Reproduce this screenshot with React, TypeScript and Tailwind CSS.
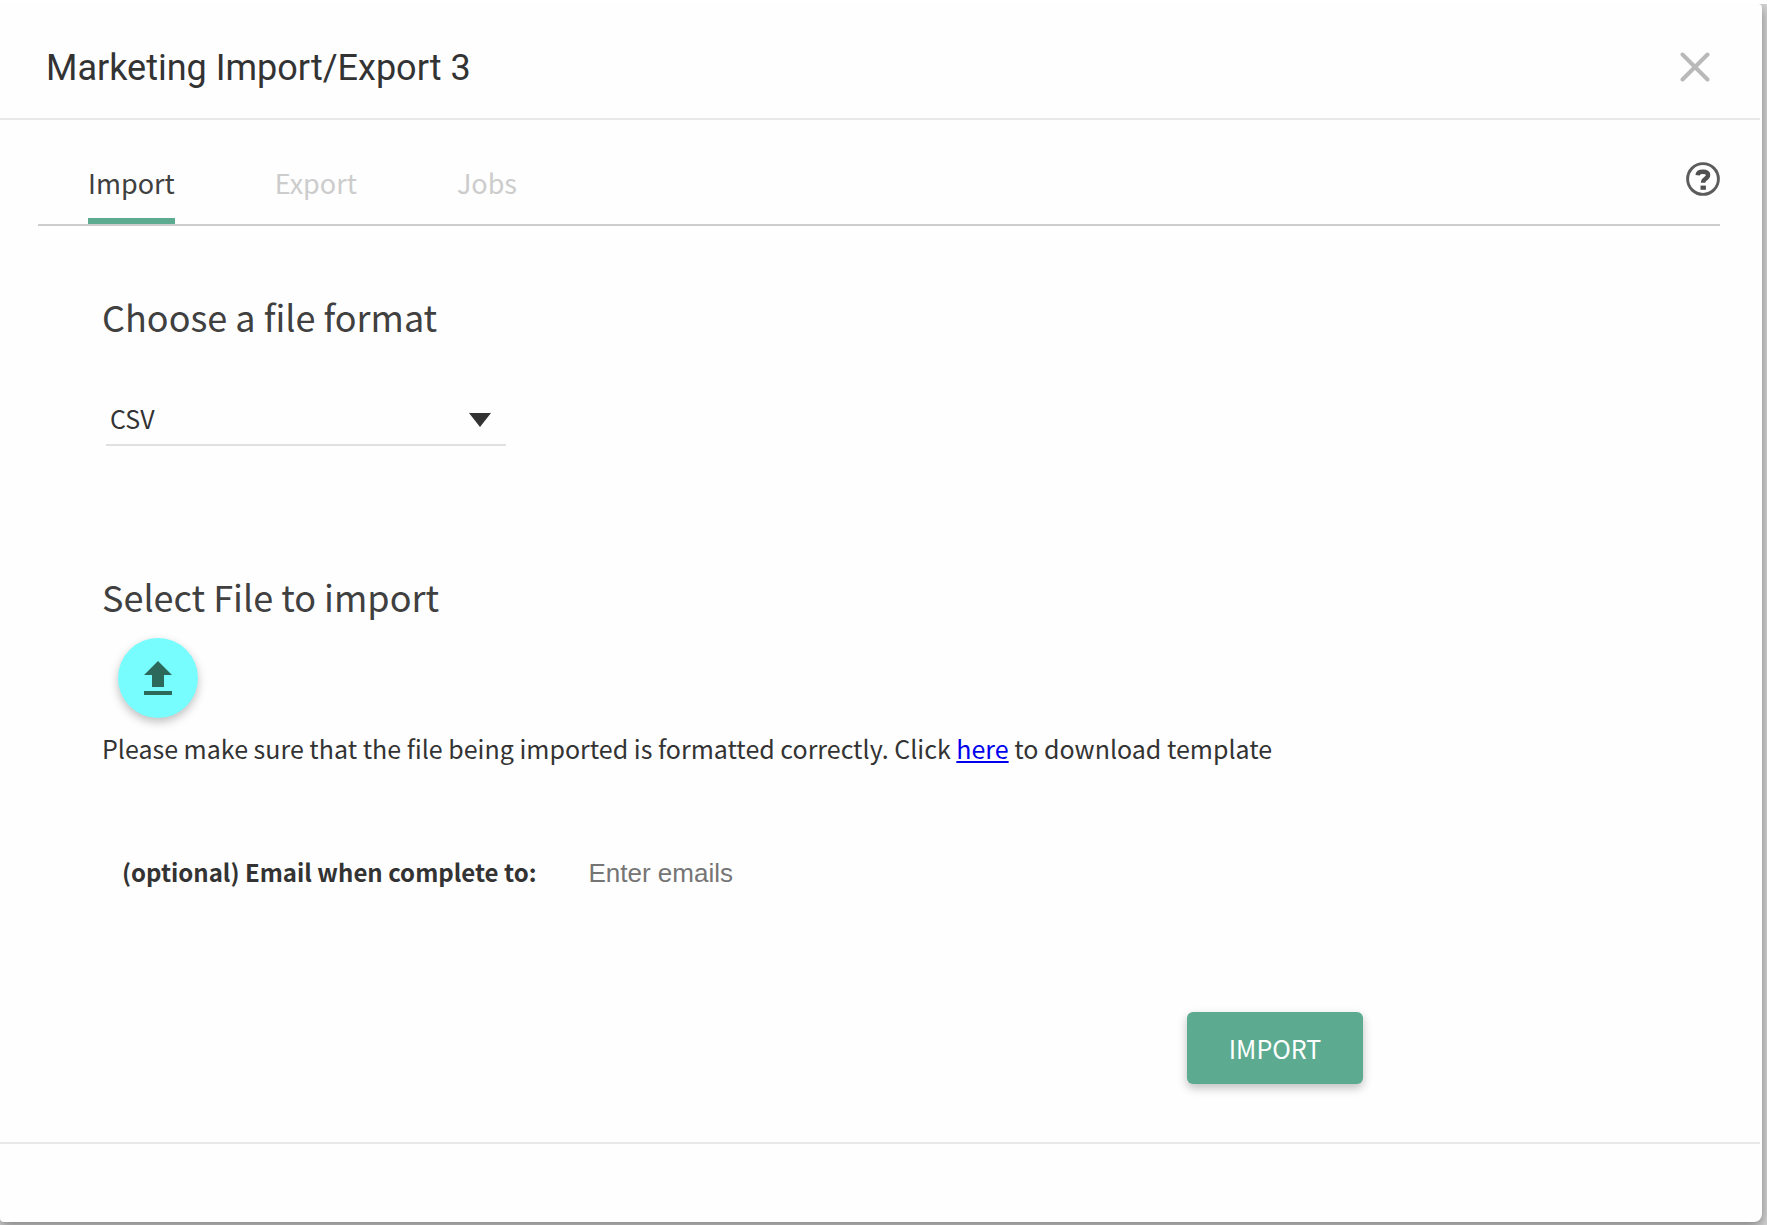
import { useState } from 'react'

const TABS = ['Import', 'Export', 'Jobs']
const FORMATS = ['CSV', 'JSON']

function CloseIcon() {
  return (
    <svg width="30" height="30" viewBox="0 0 30 30" fill="none" stroke="#b9b9b9" strokeWidth="4" strokeLinecap="round">
      <path d="M2.5 2.5l25 25M27.5 2.5l-25 25" />
    </svg>
  )
}

function HelpIcon() {
  return (
    <svg width="34" height="34" viewBox="0 0 34 34" fill="none" stroke="#5c5c5c">
      <circle cx="17" cy="17" r="15.4" strokeWidth="2.9" />
      <path d="M11.6 13.2c.3-2.4 2.2-3.4 5.2-3.4 3.3 0 5.3 1.1 5.3 3.3 0 1.9-1.2 2.8-2.7 3.7-1.6 1-2.3 1.8-2.3 4" stroke="#505050" strokeWidth="4.4" />
      <path d="M17.2 23.6v4.2" stroke="#505050" strokeWidth="5.4" />
    </svg>
  )
}

function UploadIcon() {
  return (
    <svg width="28" height="34" viewBox="0 0 28 34" fill="#2c695b">
      <path d="M14 0L28 14H20V26H8V14H0ZM0 30H28V34H0Z" />
    </svg>
  )
}

export default function App() {
  const [activeTab, setActiveTab] = useState('Import')
  const [format, setFormat] = useState('CSV')
  const [emails, setEmails] = useState('')

  return (
    <div className="flex min-h-screen flex-col bg-white pt-1 font-['Noto_Sans_CJK_SC',sans-serif] text-[25px] leading-8 text-[#333]">
      {/* Backdrop */}
      <div className="flex flex-1 flex-col overflow-hidden bg-[#d4d4d4] pr-[5px] pb-[3px]">
        <div
          role="dialog"
          aria-labelledby="dialog-title"
          className="flex flex-1 flex-col rounded-tr-sm rounded-br-lg rounded-bl-sm bg-[#fefefe] shadow-[0_4px_12px_rgba(0,0,0,0.4)]"
        >
          {/* Title bar */}
          <header className="mr-0.5 flex items-start justify-between border-b-2 border-[#e8e8e8] pt-10 pr-[50px] pb-[26px] pl-[46px]">
            <h1 id="dialog-title" className="font-[Roboto,sans-serif] text-[36px] leading-12">
              Marketing Import/Export 3
            </h1>
            <button type="button" aria-label="Close" className="pt-2">
              <CloseIcon />
            </button>
          </header>

          {/* Tabs */}
          <div className="mr-[42px] ml-[38px] flex items-start justify-between border-b-2 border-[#ccc] pt-[42px]">
            <nav role="tablist" className="flex gap-[100px] pl-[50px]">
              {TABS.map(tab => (
                <button
                  key={tab}
                  type="button"
                  role="tab"
                  aria-selected={activeTab === tab}
                  onClick={() => setActiveTab(tab)}
                  className={`border-b-6 pt-[5px] pb-[19px] text-[27px] ${
                    activeTab === tab ? 'border-[#5cab91] text-[#404040]' : 'border-transparent text-[#ccc]'
                  }`}
                >
                  {tab}
                </button>
              ))}
            </nav>
            <button type="button" aria-label="Help">
              <HelpIcon />
            </button>
          </div>

          <main className="flex flex-1 flex-col items-start px-[102px] pt-[66px]">
            <h2 className="text-[36px] leading-12 text-[#404040]">Choose a file format</h2>

            <div className="relative mt-[55px] ml-1 w-[400px]">
              <select
                aria-label="File format"
                value={format}
                onChange={e => setFormat(e.target.value)}
                className="h-[51px] w-full appearance-none border-b-2 border-[#e0e0e0] bg-transparent pb-1 pl-1"
              >
                {FORMATS.map(f => (
                  <option key={f}>{f}</option>
                ))}
              </select>
              <svg className="pointer-events-none absolute top-[18px] right-[15px]" width="22" height="14" viewBox="0 0 22 14" fill="#333">
                <path d="M0 0H22L11 14Z" />
              </svg>
            </div>

            <h2 className="mt-[126px] text-[36px] leading-12 text-[#404040]">Select File to import</h2>
            <button
              type="button"
              aria-label="Upload file"
              className="mt-[18px] ml-4 flex size-20 items-center justify-center rounded-full bg-[#78fdfe] shadow-[0_4px_10px_rgba(0,0,0,0.25)]"
            >
              <UploadIcon />
            </button>
            <p className="mt-[14px]">
              Please make sure that the file being imported is formatted correctly. Click{' '}
              <a href="#template" className="text-[#0000ee] underline">
                here
              </a>{' '}
              to download template
            </p>

            <div className="mt-[92px] ml-5 flex items-baseline gap-[52px]">
              <label htmlFor="emails" className="text-[24px] font-bold">
                (optional) Email when complete to:
              </label>
              <input
                id="emails"
                type="text"
                value={emails}
                onChange={e => setEmails(e.target.value)}
                placeholder="Enter emails"
                className="w-80 bg-transparent font-['Liberation_Sans',Arial,sans-serif] text-[26px] placeholder:text-[#757575]"
              />
            </div>

            <div className="mt-[123px] mb-14 flex w-[1261px] justify-end">
              <button type="button" className="h-18 w-44 rounded-md bg-[#5cab91] text-white shadow-[0_4px_10px_rgba(0,0,0,0.25)]">
                IMPORT
              </button>
            </div>
          </main>

          <footer className="mr-0.5 h-20 border-t-2 border-[#e8e8e8]" />
        </div>
      </div>
    </div>
  )
}
